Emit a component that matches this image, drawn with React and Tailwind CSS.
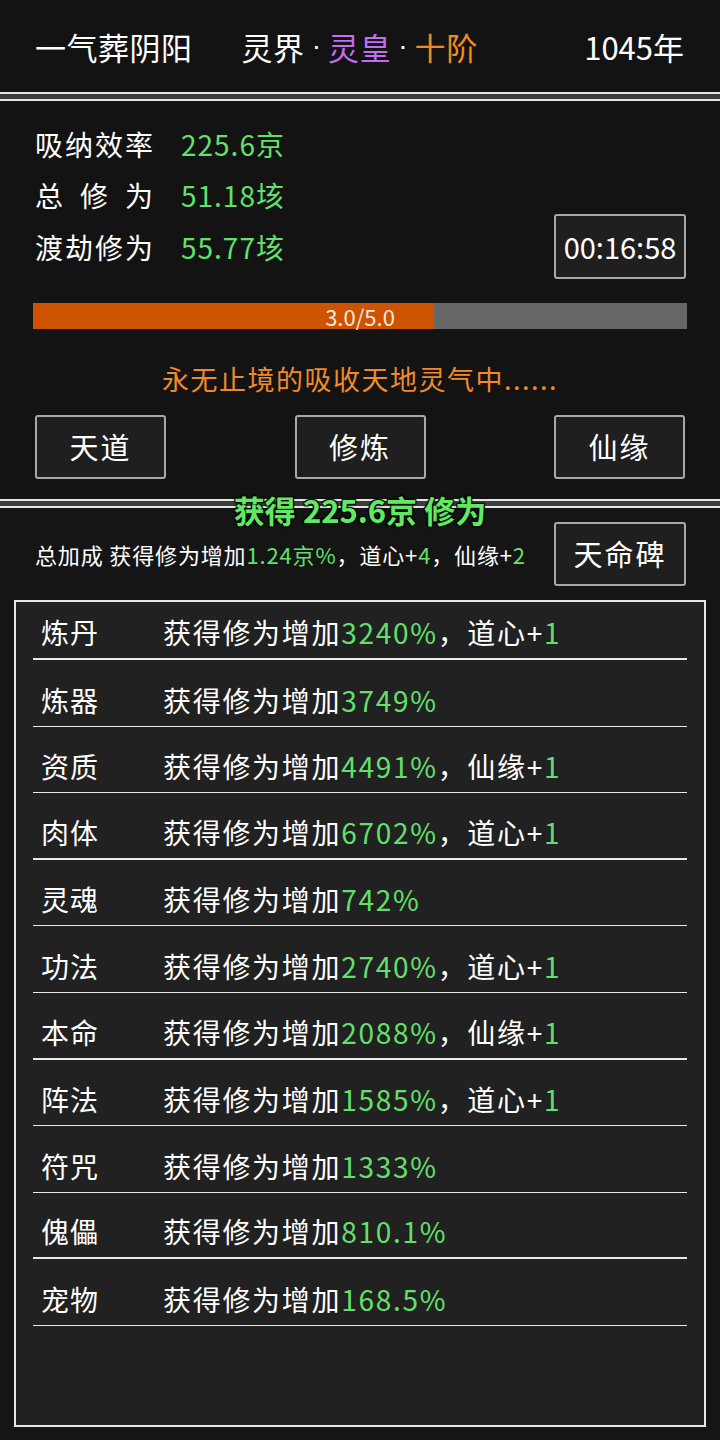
import React from "react";

const G = "text-[#63e06b]";

const rows = [
  { name: "炼丹", pct: "3240%", extra: ["道心", "1"] },
  { name: "炼器", pct: "3749%" },
  { name: "资质", pct: "4491%", extra: ["仙缘", "1"] },
  { name: "肉体", pct: "6702%", extra: ["道心", "1"] },
  { name: "灵魂", pct: "742%" },
  { name: "功法", pct: "2740%", extra: ["道心", "1"] },
  { name: "本命", pct: "2088%", extra: ["仙缘", "1"] },
  { name: "阵法", pct: "1585%", extra: ["道心", "1"] },
  { name: "符咒", pct: "1333%" },
  { name: "傀儡", pct: "810.1%" },
  { name: "宠物", pct: "168.5%" },
];

function Sep() {
  return <div className="h-[9px] shrink-0 border-y-2 border-[#e4e4e4] bg-[#3c3c3c]" />;
}

function Btn({ children, className = "" }) {
  return (
    <div
      className={
        "flex items-center justify-center rounded-[3px] border-2 border-[#a8a8a8] bg-[#1f1f1f] text-white " +
        className
      }
    >
      {children}
    </div>
  );
}

function Dot() {
  return <span className="mx-[7px] font-['Liberation_Sans',sans-serif] text-[28px]">·</span>;
}

export default function App() {
  const progress = 3.0 / 5.0;
  return (
    <div className="w-[720px] h-[1440px] flex flex-col bg-[#0c0c0c] text-white font-['Noto_Sans_CJK_SC',sans-serif] overflow-hidden">
      {/* header */}
      <div className="h-[92px] shrink-0 bg-[#131313] flex items-center pl-[35px] pr-[36px] text-[31px] leading-none">
        <span className="tracking-[0.5px]">一气葬阴阳</span>
        <span className="ml-[49px] flex items-center">
          <span className="tracking-[0.6px]">灵界</span>
          <Dot />
          <span className="text-[#c06ff0] tracking-[0.6px]">灵皇</span>
          <Dot />
          <span className="text-[#f08a1f] tracking-[0.6px]">十阶</span>
        </span>
        <span className="ml-auto">1045年</span>
      </div>
      <Sep />
      {/* panel 2 */}
      <div className="h-[398px] shrink-0 bg-[#131313] px-[33px] pt-[17px] flex flex-col">
        <div className="flex justify-between items-start">
          <div className="flex flex-col pl-[2px] text-[28px]">
            <div className="h-[51.5px] flex items-center">
              <span className="w-[146px] tracking-[2px]">吸纳效率</span>
              <span className={G + " tracking-[1px]"}>225.6京</span>
            </div>
            <div className="h-[51.5px] flex items-center">
              <span className="w-[146px]">
                <span className="w-[118px] flex justify-between">
                  <span>总</span>
                  <span>修</span>
                  <span>为</span>
                </span>
              </span>
              <span className={G + " tracking-[1px]"}>51.18垓</span>
            </div>
            <div className="h-[51.5px] flex items-center">
              <span className="w-[146px] tracking-[2px]">渡劫修为</span>
              <span className={G + " tracking-[1px]"}>55.77垓</span>
            </div>
          </div>
          <Btn className="mt-[96px] mr-[1px] w-[132px] h-[65px] text-[29px] leading-none">00:16:58</Btn>
        </div>
        <div className="mt-[24px] h-[26px] bg-[#666666] relative">
          <div className="h-full bg-[#cd5300]" style={{ width: `${progress * 100 + 1.3}%` }} />
          <div className="absolute inset-0 flex items-center justify-center text-[22px] leading-none text-[#f6e8dc]">
            3.0/5.0
          </div>
        </div>
        <div className="mt-[29px] h-[40px] flex items-center justify-center text-[27px] leading-none text-[#f08a2a] tracking-[1.5px]">
          永无止境的吸收天地灵气中......
        </div>
        <div className="mt-[17px] flex justify-between px-[2px]">
          <Btn className="w-[131px] h-[64px] text-[29px] tracking-[2px]">天道</Btn>
          <Btn className="w-[131px] h-[64px] text-[29px] tracking-[2px]">修炼</Btn>
          <Btn className="w-[131px] h-[64px] text-[29px] tracking-[2px]">仙缘</Btn>
        </div>
      </div>
      <Sep />
      {/* panel 3 */}
      <div className="flex-1 bg-[#151515] relative flex flex-col px-[14px]">
        <div className="absolute left-0 right-0 top-[-14px] flex justify-center">
          <span className="text-[31px] font-bold leading-none text-[#62e863] [text-shadow:0_0_2px_#0a2a0a,1px_1px_1px_#000,-1px_-1px_1px_#000,1px_-1px_1px_#000,-1px_1px_1px_#000]">
            获得 225.6京 修为
          </span>
        </div>
        <div className="mt-[14px] flex items-center justify-between pl-[21px] pr-[20px]">
          <span className="text-[22px] leading-none tracking-[0.85px]">
            总加成 获得修为增加<span className={G}>1.24京%</span>，道心+<span className={G}>4</span>，仙缘+
            <span className={G}>2</span>
          </span>
          <Btn className="w-[132px] h-[64px] text-[29px] tracking-[2px]">天命碑</Btn>
        </div>
        <div className="mt-[14px] h-[827px] border-2 border-[#e6e6e6] bg-[#212121] px-[17px]">
          {rows.map((r, i) => (
            <div
              key={r.name}
              className={
                "flex items-end pb-[6px] pl-[8px] text-[28px] leading-[40px] border-[#e8e8e8] " +
                (i === 0 ? "h-[58px] " : "h-[66.6px] ") +
                (i % 3 === 0 ? "border-b-2" : "border-b")
              }
            >
              <span className="w-[122px] tracking-[1px]">{r.name}</span>
              <span className="tracking-[1.7px]">
                获得修为增加<span className={G}>{r.pct}</span>
                {r.extra && (
                  <>
                    ，{r.extra[0]}+<span className={G}>{r.extra[1]}</span>
                  </>
                )}
              </span>
            </div>
          ))}
        </div>
      </div>
    </div>
  );
}
